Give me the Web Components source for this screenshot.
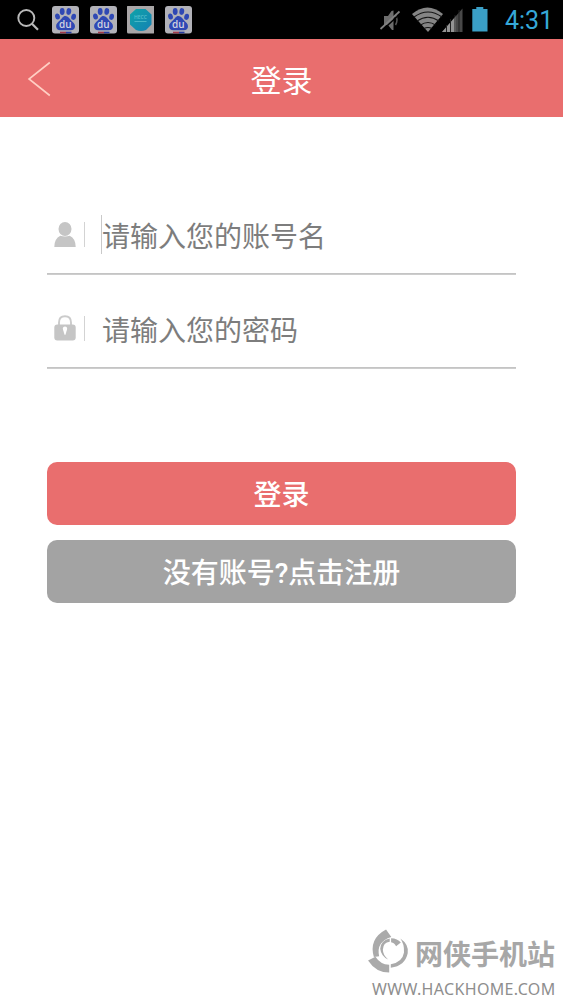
<!DOCTYPE html>
<html lang="zh-CN">
<head>
<meta charset="utf-8">
<title>登录</title>
<style>
html,body{margin:0;height:100%;background:#fff;overflow:hidden}
body{font-family:Roboto,"Noto Sans CJK SC",sans-serif}
</style>
</head>
<body>
<login-page></login-page>
<script>
const define = (name, html) => customElements.define(name, class extends HTMLElement {
  constructor() {
    super();
    this.attachShadow({mode: 'open'}).innerHTML = html;
  }
});

define('paw-icon', `<style>:host{display:block;width:27px;height:28px}svg{display:block}</style>
<svg width="27" height="28" viewBox="0 0 27 28">
<rect width="27" height="27.5" rx="3" fill="#b2b2b8"/>
<g fill="#2f48b4"><ellipse cx="5.500" cy="10.500" rx="2.400" ry="3.100" transform="rotate(-12 5.500 10.500)"/><ellipse cx="10.200" cy="5.500" rx="2.400" ry="3.400"/><ellipse cx="16.800" cy="5.500" rx="2.400" ry="3.400" transform="rotate(8 16.800 5.500)"/><ellipse cx="21.600" cy="10.800" rx="2.400" ry="3.100" transform="rotate(10 21.600 10.800)"/>
<path d="M13.4 10c-2.6 0-3.5 2.600-5.300 4.300-2.500 2.300-4 3.500-4 6 0 2.600 1.800 3.900 4.200 3.900h10.400c2.600 0 4.300-1.600 4.300-4 0-2.600-2.100-3.800-4.100-6-1.600-1.900-2.700-4.200-5.500-4.200z"/></g>
<text x="13.3" y="22" text-anchor="middle" font-family="Open Sans" font-size="10" font-weight="600" fill="#d2d4e0">du</text>
<path d="M8 26.500h6" stroke="#a23a4c" stroke-width="1.600"/><path d="M14 26.500h5.500" stroke="#273ca2" stroke-width="1.600"/>
</svg>`);

define('status-bar', `<style>
:host{display:flex;height:39px;background:#000;box-sizing:border-box;padding:0 12px 0 16px;align-items:flex-start}
svg{display:block;flex:none}.apps{display:flex;padding-top:6px;margin-left:12px;gap:10.700px}
.search{margin-top:7px}.sys{display:flex;margin-left:auto}
time{width:46px;margin-left:15px;font:25px/39px Roboto,sans-serif;color:#35a8d8;text-align:right;white-space:nowrap;padding-top:1px}
</style>
<svg class="search" width="24" height="25" viewBox="0 0 24 25" fill="none" stroke="#b9b9b9" stroke-width="1.900"><circle cx="10.300" cy="11" r="8"/><path d="M16 16.800l6 6" stroke-width="2.200"/></svg>
<div class="apps"><paw-icon></paw-icon><paw-icon></paw-icon>
<svg width="27" height="28" viewBox="0 0 27 28"><defs><linearGradient id="g" x1="0" y1="0" x2="1" y2="1"><stop offset="0" stop-color="#10a3a8"/><stop offset="1" stop-color="#1481b4"/></linearGradient></defs><rect width="27.500" height="28" y="-.5" rx="1.500" fill="#a9a6a7"/><path d="M9 3h9.500l6 5.500v10l-5.500 5.500q-5 2-10 0l-6-5.500v-10z" fill="url(#g)"/><text x="13.500" y="13" text-anchor="middle" font-family="Open Sans" font-size="5" font-weight="600" fill="#58c0ce">HECC</text><path d="M7.500 15.500h12" stroke="#4ab7c6" stroke-width="1"/></svg>
<paw-icon></paw-icon></div>
<div class="sys"><svg width="113" height="39" viewBox="377 0 113 39">
<path d="M384 16h4l3.500-5 2-.5v19.500h-1.500L388 25h-4z" fill="#6d6d6d"/><path d="M395.500 15q3 5 0 10" stroke="#555" stroke-width="1.500" fill="none"/><path d="M382 30.500L401 13" stroke="#000" stroke-width="1.500"/><path d="M380.500 29L399.500 11.500" stroke="#808080" stroke-width="1.700"/>
<path d="M412 14q15.500-13 31 0L428 32z" fill="#858585"/>
<g fill="none" stroke="#151515" stroke-width="1.200"><path d="M414 17q14-10 28 0M417 21q11-7.500 22 0M420.500 25q7.500-5 15 0M424 28.500q4-2 8 0"/></g>
<path d="M442 32L462.500 8.500V32z" fill="#484848"/><path d="M442 32l14-16v16z" fill="#949494"/><path d="M446.500 25v7m4-13v13m4.500-17v17m4-22v22" stroke="#202020" stroke-width="1"/>
<path d="M472.300 9h4V7h7v2h4.200v22.500h-15.200z" fill="#3a9fc6"/></svg><time>4:31</time></div>`);

define('title-bar', `<style>
:host{display:grid;grid-template-columns:1fr auto 1fr;height:78px;background:#e96e6e;color:#fff;align-items:center}
svg{display:block;margin:1px 0 0 27px}.t{font-size:31px;line-height:44px;padding-top:7px}</style>
<svg width="25" height="36" viewBox="0 0 25 36" fill="none" stroke="#ffcfc4" stroke-width="1.600"><path d="M22.800 1.500L2 18 22.800 34.500"/></svg>
<div class="t"><slot></slot></div>`);

define('input-row', `<style>
:host{display:flex;box-sizing:border-box;height:78px;align-items:center;color:#7d7d7d;background:linear-gradient(#cdcdcd,#cdcdcd) 0 100%/100% 1px no-repeat,linear-gradient(#c4c4c4,#c4c4c4) 0 calc(100% - 1px)/100% 1px no-repeat;padding-bottom:4px}
.i{width:37px;display:flex;flex:none;padding-left:7px;box-sizing:border-box}.sep{width:1px;height:25px;background:#d3d3d3}
.caret{width:1px;height:39px;background:var(--caret,transparent);margin-left:16px}.p{font-size:28px;line-height:40px;white-space:nowrap;padding-top:7px}
</style><span class="i"><slot name="icon"></slot></span><span class="sep"></span><span class="caret"></span><span class="p"><slot></slot></span>`);

define('user-icon', `<style>:host,svg{display:block}</style><svg width="23" height="26" viewBox="0 -.7 23 26" fill="#c5c5c5"><ellipse cx="11" cy="7.300" rx="6.500" ry="7"/><path d="M.3 25.300q0-8.500 6-11.300 4.700 1.500 9.400 0 6 2.800 6 11.300z"/></svg>`);
define('lock-icon', `<style>:host,svg{display:block}</style><svg width="23" height="26" viewBox="0 0 23 26"><path d="M5 11V7.500q0-6.300 6-6.300t6 6.300V11" fill="none" stroke="#cbcbcb" stroke-width="1.900"/><rect x=".3" y="9.500" width="21.400" height="16" rx="3" fill="#c5c5c5"/><path d="M8.800 13.700a2.200 2.200 0 1 1 4.400 0L11.500 19.800h-1z" fill="#fff"/></svg>`);

define('action-button', `<style>
:host{display:block}button{display:block;width:100%;height:62.500px;border:0;border-radius:10px;padding:6px 0 0;background:var(--fill);color:#fff;font:500 28px/40px Roboto,"Noto Sans CJK SC",sans-serif}</style><button><slot></slot></button>`);

define('site-mark', `<style>
:host{display:grid;grid-template-columns:46px 141px;width:187px;color:#a7a7a7}
svg{display:block;overflow:visible}.n{font:700 28px/42px "Noto Sans CJK SC",sans-serif;white-space:nowrap;padding-top:2px}
.u{grid-column:1/3;font:400 16px/20px "Noto Sans","Noto Sans CJK SC",sans-serif;letter-spacing:.35px;white-space:nowrap;padding:3px 0 0 3px;color:#8e8e8e}
</style>
<svg width="46" height="46" viewBox="8.400 5.500 43.500 49.200" preserveAspectRatio="none" fill="#aaa">
<path d="M24.500 5l5 8Q15 18 18 33.500l-5 1Q8 15 24.500 5z"/>
<path d="M7.500 38l7-4q4.500 8 13 8.800V51Q15 51 7.500 38z"/>
<path d="M38 14.500q8.500 6.500 7 16Q42.500 44 29 46v-4q11-2 12.500-12.500.5-9-3.500-15z"/>
<path d="M28 14.500q-8.500 2-9 11 .8 8 7.500 11.500-5-5-5-10.500.3-8 6.500-8.500z"/>
<path d="M29.300 14.300q6 .2 9.200 4.700l-4.500 4q-1.500-4-4.700-4.500z"/>
</svg><span class="n">网侠手机站</span><span class="u">WWW.HACKHOME.COM</span>`);

define('login-page', `<style>
:host{display:flex;flex-direction:column;width:563px;height:1002px;background:#fff}
main{display:flex;flex-direction:column;padding:80px 47px 0;flex:1}
.fields{display:grid;gap:16px}.actions{display:grid;gap:15.500px;margin-top:93px}
site-mark{align-self:flex-end;margin:auto -40px 3px 0}
</style>
<status-bar></status-bar><title-bar>登录</title-bar>
<main><div class="fields"><input-row style="--caret:#c9c9c9"><user-icon slot="icon"></user-icon>请输入您的账号名</input-row>
<input-row><lock-icon slot="icon"></lock-icon>请输入您的密码</input-row></div>
<div class="actions"><action-button style="--fill:#e96e6e">登录</action-button><action-button style="--fill:#a3a3a3">没有账号?点击注册</action-button></div>
<site-mark></site-mark></main>`);
</script>
</body>
</html>
